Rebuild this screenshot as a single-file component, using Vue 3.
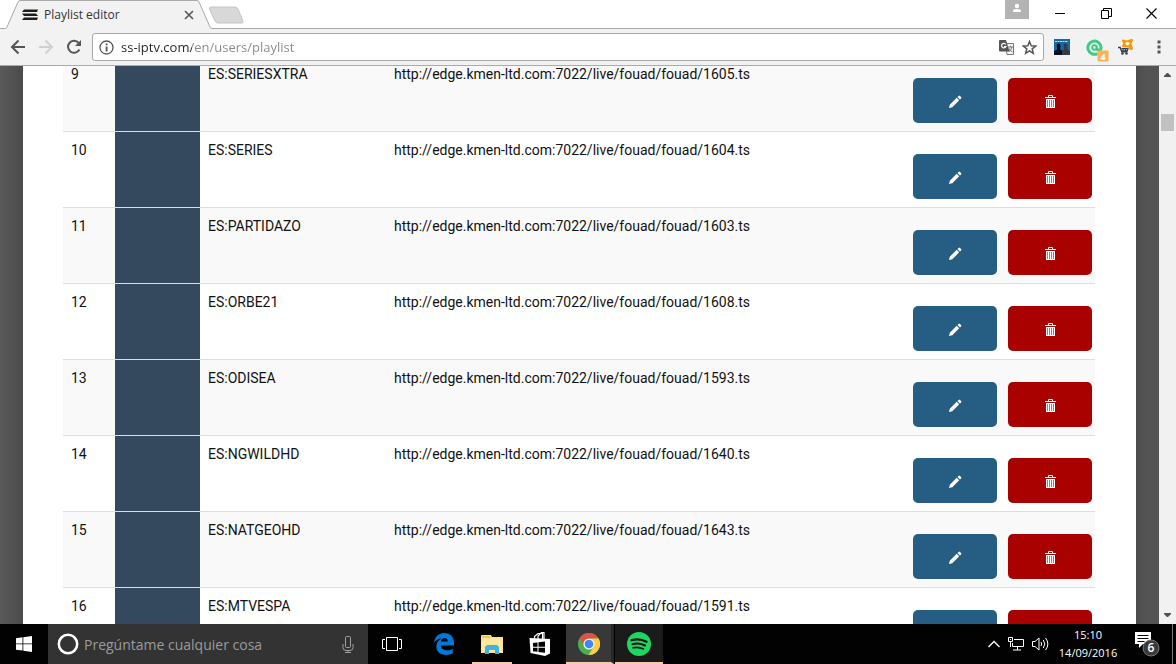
<script setup>
import { ref } from 'vue'

const base = 'http://edge.kmen-ltd.com:7022/live/fouad/fouad/'
const channels = [
  { id: 9, name: 'ES:SERIESXTRA', file: '1605.ts' },
  { id: 10, name: 'ES:SERIES', file: '1604.ts' },
  { id: 11, name: 'ES:PARTIDAZO', file: '1603.ts' },
  { id: 12, name: 'ES:ORBE21', file: '1608.ts' },
  { id: 13, name: 'ES:ODISEA', file: '1593.ts' },
  { id: 14, name: 'ES:NGWILDHD', file: '1640.ts' },
  { id: 15, name: 'ES:NATGEOHD', file: '1643.ts' },
  { id: 16, name: 'ES:MTVESPA', file: '1591.ts' },
]
const address = ref('ss-iptv.com/en/users/playlist')
const query = ref('')
</script>

<template>
  <div class="screen">
    <header class="tabstrip">
      <div class="tab">
        <svg class="tab-shape" width="212" height="29" viewBox="0 0 212 29" aria-hidden="true">
          <path d="M0 29V28.500H5.500Q6.500 28 7 27L18 2Q18.800 .5 20 .5H197Q198.500 .5 199 2L210 27Q210.500 28.500 212 28.500V29Z" fill="#f2f2f2" />
          <path d="M0 28.500H5.500Q6.500 28 7 27L18 2Q18.800 .5 20 .5H197Q198.500 .5 199 2L210 27Q210.500 28.500 212 28.500" fill="none" stroke="#a9a9a9" />
        </svg>
        <svg class="favicon" width="16" height="12" viewBox="0 0 16 12" aria-hidden="true">
          <path d="M2 .5h14L15 3H0zM0 4.500h14l2 2.500H2zM2 8.500h14L15 11H0z" fill="#1d1d1b" />
        </svg>
        <span class="tab-title">Playlist editor</span>
        <button class="plain tab-close" aria-label="Close tab">
          <svg width="10" height="10" viewBox="0 0 10 10"><path d="M1 1l8 8M9 1L1 9" stroke="#5a5a5a" stroke-width="1.700" /></svg>
        </button>
      </div>
      <button class="plain new-tab" aria-label="New tab">
        <svg width="36" height="18" viewBox="0 0 36 18"><path d="M3 1h24q2 0 3 2l5 12q.5 2-1 2H10q-2 0-3-2L1.500 3Q1 1 3 1z" fill="#d8d8d8" stroke="#c4c4c4" /></svg>
      </button>
      <div class="spacer"></div>
      <button class="plain person" aria-label="Profile">
        <svg width="24" height="19" viewBox="0 0 24 19"><circle cx="12" cy="6" r="2.200" fill="#fff" /><path d="M8 12v-1.500Q8.500 9 12 9t4 1.500V12z" fill="#fff" /></svg>
      </button>
      <button class="plain win" aria-label="Minimize"><svg width="11" height="11" viewBox="0 0 11 11"><path d="M0 5.500h10" stroke="#000" /></svg></button>
      <button class="plain win" aria-label="Restore"><svg width="11" height="11" viewBox="0 0 11 11"><path d="M.5 2.500h7v8h-7zM2.500 2.500v-2h8v8h-3" fill="none" stroke="#000" /></svg></button>
      <button class="plain win" aria-label="Close"><svg width="11" height="11" viewBox="0 0 11 11"><path d="M.5.5l10 10M10.500.5l-10 10" stroke="#000" stroke-width="1.100" /></svg></button>
    </header>

    <nav class="toolbar" aria-label="Browser">
      <button class="plain tool" aria-label="Back"><svg width="16" height="16" viewBox="0 0 16 16"><path d="M15 8H2.500M8.500 1.500L2 8l6.500 6.500" fill="none" stroke="#555" stroke-width="2" /></svg></button>
      <button class="plain tool" aria-label="Forward"><svg width="16" height="16" viewBox="0 0 16 16"><path d="M1 8h12.500M7.500 1.500L14 8l-6.500 6.500" fill="none" stroke="#d0d0d0" stroke-width="2" /></svg></button>
      <button class="plain tool" aria-label="Reload"><svg width="16" height="16" viewBox="0 0 16 16"><path d="M13.400 10.500A6 6 0 1 1 12.700 4" fill="none" stroke="#555" stroke-width="2" /><path d="M15 1v6H9z" fill="#555" /></svg></button>
      <div class="omnibox">
        <svg width="15" height="15" viewBox="0 0 15 15" aria-hidden="true"><circle cx="7.500" cy="7.500" r="6.500" fill="none" stroke="#555" stroke-width="1.300" /><path d="M6.700 3.500h1.800v1.700H6.700zM6.700 6.500h1.800V11.500H6.700z" fill="#555" /></svg>
        <input v-model="address" class="address" type="text" aria-label="Address" spellcheck="false" />
        <button class="plain" aria-label="Translate this page">
          <svg width="15" height="15" viewBox="0 0 15 15"><path d="M6 3.500h8.500v11H8z" fill="#f4f4f4" stroke="#777" /><path d="M0 1q0-1 1-1h6l3.500 11.500H1q-1 0-1-1z" fill="#555" /><path d="M6.800 4.300A2.300 2.300 0 1 0 7 6.500H5" fill="none" stroke="#fff" stroke-width="1.200" /><path d="M9 7h5M11.500 5.800V7M13 7q-.8 3-3.500 5M10 8.500q1 2.500 3.500 3.500" fill="none" stroke="#777" /></svg>
        </button>
        <button class="plain star" aria-label="Bookmark this page">
          <svg width="15" height="15" viewBox="0 0 15 15"><path d="M7.500 1.500l1.700 4.200 4.500.3-3.500 2.900 1.100 4.400-3.800-2.400-3.800 2.400 1.100-4.400L1.300 6l4.500-.3z" fill="none" stroke="#555" stroke-width="1.500" /></svg>
        </button>
      </div>
      <button class="plain ext" aria-label="Video extension">
        <svg width="16" height="16" viewBox="0 0 16 16"><path d="M0 0h16v16H0z" fill="#1967a5" /><path d="M1 2.500h13" stroke="#b9dcf4" stroke-dasharray="2 .5" /><path d="M0 16v-4l3-1.500V9Q1.800 4.500 4.500 4.500T6.200 9v1.500L8 11.500V16z" fill="#07111c" /><path d="M8 16v-4.500l2-1V9Q9 4.500 11.500 4.500T13.300 9v1.500l2.700 1.500v4z" fill="#343a40" /></svg>
      </button>
      <button class="plain ext" aria-label="Antivirus extension">
        <svg class="badge-icon" width="23" height="23" viewBox="0 0 23 23"><path d="M11.500 14.600A6.600 6.600 0 1 1 15.100 8.500Q15 11.300 13 11.300T10.800 8.500" fill="none" stroke="#3ecb85" stroke-width="3" /><circle cx="8.500" cy="8.500" r="2.300" fill="none" stroke="#3ecb85" stroke-width="2" /><rect x="11.500" y="11.500" width="11" height="11" rx="1" fill="#ffb157" /><text x="14.500" y="20.500" class="count">4</text></svg>
      </button>
      <button class="plain ext" aria-label="Shopping extension">
        <svg width="16" height="16" viewBox="0 0 16 16"><path d="M4 2.200Q3.800.4 5.500.6L9 1.500 13 0q2.600-.4 1.800 1.800L13.300 5l1.500 3.500q.6 2.700-1.600 2.700-1 0-1.700-1.200L10.200 8.200H4.800q-1.500-.7-.6-2l1.300-1.700z" fill="#ff9800" /><path d="M7 4l2.500-1 2.200.8-.8 2-2.200.6z" fill="#fff" /><path d="M0 8.500h2.200l1.600 4.200h5l1.400-3.700" fill="none" stroke="#35404f" stroke-width="1.400" /><path d="M3.500 9.500h6M3.500 11.200h6M5.200 9v3.500M7.500 9v3.500" fill="none" stroke="#35404f" /><circle cx="4.500" cy="14.500" r="1.300" fill="#35404f" /><circle cx="8.500" cy="14.500" r="1.300" fill="#35404f" /></svg>
      </button>
      <button class="plain menu" aria-label="Menu"><svg width="4" height="14" viewBox="0 0 4 14"><path d="M.5 .5h3v3h-3zM.5 5.500h3v3h-3zM.5 10.500h3v3h-3z" fill="#555" /></svg></button>
    </nav>

    <div class="viewport">
      <main class="page">
        <table class="channels">
          <colgroup><col class="c-num" /><col class="c-logo" /><col class="c-name" /><col /><col class="c-act" /></colgroup>
          <tbody>
            <tr v-for="c in channels" :key="c.id">
              <td>{{ c.id }}</td>
              <td class="logo"></td>
              <td>{{ c.name }}</td>
              <td>{{ base }}{{ c.file }}</td>
              <td class="actions">
                <div class="pair">
                  <button class="act edit" :aria-label="'Edit ' + c.name">
                    <svg width="14" height="14" viewBox="0 0 14 14"><path d="M1 13l.8-3.300L8.700 2.800l2.500 2.500-6.900 6.900zM9.500 2l1.100-1.100q.7-.6 1.400 0l1.100 1.100q.6.700 0 1.400L12 4.500z" fill="#fff" /></svg>
                  </button>
                  <button class="act remove" :aria-label="'Delete ' + c.name">
                    <svg width="11" height="14" viewBox="0 0 11 14"><path d="M3.500 2V.5h4V2" fill="none" stroke="#fff" /><path d="M0 2h11v1H0z" fill="#fff" /><path d="M1 4h9v9H1z" fill="#fff" /><path d="M2.500 5v7M4.500 5v7M6.500 5v7M8.500 5v7" stroke="#c96b6b" /></svg>
                  </button>
                </div>
              </td>
            </tr>
          </tbody>
        </table>
      </main>
      <div class="scrollbar" aria-hidden="true">
        <svg width="7" height="4" viewBox="0 0 7 4"><path d="M0 4V3l3-3h1l3 3v1z" fill="#505050" /></svg>
        <div class="thumb"></div>
        <svg width="7" height="4" viewBox="0 0 7 4"><path d="M0 0v1l3 3h1l3-3V0z" fill="#505050" /></svg>
      </div>
    </div>

    <footer class="taskbar">
      <button class="plain app" aria-label="Start">
        <svg width="16" height="16" viewBox="0 0 16 16"><path d="M0 2.200l6.500-.9v6.200H0zM7.300 1.200L16 0v7.500H7.300zM0 8.300h6.500v6.300L0 13.700zM7.300 8.300H16V16l-8.700-1.200z" fill="#fff" /></svg>
      </button>
      <div class="search">
        <svg width="22" height="22" viewBox="0 0 22 22" aria-hidden="true"><circle cx="11" cy="11" r="9.200" fill="none" stroke="#fff" stroke-width="2.500" /></svg>
        <input v-model="query" type="text" placeholder="Pregúntame cualquier cosa" aria-label="Pregúntame cualquier cosa" />
        <button class="plain" aria-label="Voice search">
          <svg width="12" height="17" viewBox="0 0 12 17"><rect x="3.500" y=".5" width="5" height="11" rx="1" fill="none" stroke="#a0a0a0" /><path d="M1 8v3.500Q1 14.500 4 14.500h4q3 0 3-3V8M6 14.500v2M3 16.500h6" fill="none" stroke="#a0a0a0" /></svg>
        </button>
      </div>
      <button class="plain app" aria-label="Task view">
        <svg width="20" height="14" viewBox="0 0 20 14"><path d="M4.500.5h11v13h-11zM3 2.500H.5v9H3M17 2.500h2.500v9H17" fill="none" stroke="#fff" /></svg>
      </button>
      <button class="plain app edge" aria-label="Edge">
        <svg width="20" height="22" viewBox="0 0 20 22"><path d="M0 9.700C.8 3.600 4.800 0 10.300 0 16.200 0 20 4.200 20 9.500v3H6.800c.2 3.200 3 4.700 6.400 4.700 2.100 0 3.900-.5 5.600-1.500v4.500c-2 1.200-4.400 1.700-7 1.700C6 21.900 2.300 18.500 2.300 13.700c0-3.800 2.100-6.800 5.300-8.300C4.300 5.500 1.700 7.100 0 9.700zm7-1.200h6.700C13.600 6.300 12.700 5 10.500 5 8.700 5 7.400 6.400 7 8.500z" fill="#0078d7" /></svg>
      </button>
      <button class="plain app open explorer" aria-label="File Explorer">
        <svg width="22" height="19" viewBox="0 0 22 19"><path d="M1 0h9l1 2h11v16H0V1q0-1 1-1z" fill="#ffe08a" /><path d="M1 1h8l1 2h11v2H1z" fill="#f5c84c" /><path d="M1 3h20v14H1z" fill="#ffe89c" /><path d="M4 19v-7l2-2h10l2 2v7h-4v-4H8v4z" fill="#3eb1e5" /></svg>
      </button>
      <button class="plain app" aria-label="Store">
        <svg width="22" height="24" viewBox="0 0 22 24"><path d="M5.500 7V4.500L9 1.500h4.500V7M9 7V4l3.500-3.500H15V7" fill="none" stroke="#fff" stroke-width="1.200" /><path d="M.5 6L21 7v14.500L16 24 1.500 21z" fill="#fff" /><path d="M4 11l4.500-.6v4.400H4zM9.500 10.200l6.500-.8v5.400H9.500zM4 15.800h4.500v4L4 19.200zM9.500 15.800H16v5l-6.500-.9z" fill="#000" /></svg>
      </button>
      <button class="plain app open chrome" aria-label="Chrome">
        <svg width="22" height="22" viewBox="0 0 22 22"><circle cx="11" cy="11" r="11" fill="#4caf50" /><path d="M11 0a11 11 0 0 1 9.600 5.600H11L6.300 13.500 1.500 5.500A11 11 0 0 1 11 0z" fill="#de5145" /><path d="M20.600 5.600A11 11 0 0 1 10.500 22l5.200-8.300V8L13 5.600z" fill="#ffcd42" /><circle cx="11" cy="11" r="5.600" fill="#f4f4f4" /><circle cx="11" cy="11" r="4.300" fill="#4285f4" /></svg>
      </button>
      <button class="plain app open spotify" aria-label="Spotify">
        <svg width="24" height="24" viewBox="0 0 24 24"><circle cx="12" cy="12" r="12" fill="#1ed760" /><path d="M4.500 8.200q8-2.300 15 1.500" fill="none" stroke="#191414" stroke-width="2.300" stroke-linecap="round" /><path d="M5.500 12.200q6.500-1.900 12.500 1.300" fill="none" stroke="#191414" stroke-width="2" stroke-linecap="round" /><path d="M6 15.800q5.500-1.300 10.500 1.200" fill="none" stroke="#191414" stroke-width="1.600" stroke-linecap="round" /></svg>
      </button>
      <div class="spacer"></div>
      <div class="tray">
        <button class="plain" aria-label="Show hidden icons"><svg width="12" height="8" viewBox="0 0 12 8"><path d="M.5 7L6 1.500 11.500 7" fill="none" stroke="#fff" stroke-width="1.300" /></svg></button>
        <button class="plain" aria-label="Network"><svg width="16" height="14" viewBox="0 0 16 14"><path d="M6 2.500h9.500v7H4.500V6M9.500 9.500V13M5 13h8M.5.500h4v4h-4zM2.500 4.500V10" fill="none" stroke="#fff" /><path d="M2 2h1v1H2z" fill="#fff" /></svg></button>
        <button class="plain" aria-label="Volume"><svg width="17" height="14" viewBox="0 0 17 14"><path d="M.5 4.500H3l4-3.500v12L3 9.500H.5zM9 5q1.300 2 0 4M11.300 3q3 4 0 8M13.600 1q4.500 6 0 12" fill="none" stroke="#fff" /></svg></button>
      </div>
      <button class="plain clock"><span>15:10</span><span>14/09/2016</span></button>
      <button class="plain notify" aria-label="6 notifications">
        <svg width="26" height="26" viewBox="0 0 26 26"><path d="M0 1h16v12H8l-4 4v-4H0z" fill="#fff" /><path d="M2.500 4.500h11M2.500 7.500h11M2.500 10.500h7" stroke="#000" /><circle cx="16" cy="17" r="8" fill="#3b3b3b" stroke="#777" /><text x="12.500" y="21" class="bubble">6</text></svg>
      </button>
      <button class="plain desktop" aria-label="Show desktop"></button>
    </footer>
  </div>
</template>

<style>
body { margin: 0; }
</style>

<style scoped>
.screen { height: 100vh; display: flex; flex-direction: column; overflow: hidden; font-family: "Segoe UI", "Open Sans", "Noto Sans", sans-serif; background: #fff; }
.screen * { box-sizing: border-box; }
svg { display: block; flex: none; }
.plain { border: 0; padding: 0; margin: 0; background: none; font: inherit; color: inherit; display: flex; align-items: center; justify-content: center; flex: none; }
.spacer { flex: 1; }

.tabstrip { flex: none; height: 29px; display: flex; align-items: flex-start; padding-right: 3px; border-bottom: 1px solid #a9a9a9; }
.tab { position: relative; width: 212px; height: 29px; padding: 0 17px 0 22px; display: flex; align-items: center; gap: 6px; font-size: 12px; color: #333; }
.tab-shape { position: absolute; left: 0; top: 0; }
.favicon, .tab-title, .tab-close { position: relative; }
.tab-title { flex: 1; white-space: nowrap; }
.tab-close { width: 12px; height: 12px; }
.new-tab { margin: 6px 0 0 -4px; }
.person { width: 24px; height: 19px; background: #b3b3b3; margin-right: 8px; }
.win { width: 46px; height: 27px; }
.win:last-child { width: 44px; }

.toolbar { flex: none; height: 37px; display: flex; align-items: center; background: #f2f2f2; border-bottom: 1px solid #aaa; padding: 0 9px 0 4px; }
.tool { width: 28px; height: 28px; }
.omnibox { flex: 1; margin: 0 10px 0 4px; height: 28px; display: flex; align-items: center; background: #fff; border: 1px solid #a8a8a8; border-radius: 3px; padding: 0 6px; }
.address { flex: 1; min-width: 0; border: 0; outline: 0; padding: 0; margin-left: 7px; height: 24px; font-family: inherit; font-size: 13px; color: transparent; background: linear-gradient(90deg, #222 71px, #888 71px); -webkit-background-clip: text; background-clip: text; }
.star { margin-left: 8px; }
.ext { width: 16px; height: 16px; margin-right: 16px; }
.badge-icon { margin: 6px 0 0 6px; }
.count { font: bold 9px "Open Sans", sans-serif; fill: #fff; }
.menu { width: 16px; height: 24px; margin-left: 1px; }

.viewport { flex: 1; min-height: 0; display: flex; overflow: hidden; background: linear-gradient(90deg, #595959, #4c4c4c 23px, #4c4c4c calc(100% - 40px), #545454 calc(100% - 30px)); }
.page { flex: 1; min-width: 0; margin: 0 23px; padding: 0 41px 0 40px; background: #fff; overflow: hidden; }
.channels { width: 100%; margin-top: -11px; table-layout: fixed; border-collapse: separate; border-spacing: 0; font-family: Roboto, sans-serif; font-size: 14px; line-height: 20px; color: #111; }
.c-num { width: 52px; }
.c-logo { width: 85px; }
.c-name { width: 186px; }
.c-act { width: 190px; }
.channels td { height: 76px; padding: 8px; vertical-align: top; border-top: 1px solid #ddd; white-space: nowrap; }
.channels tr:nth-child(odd) { background: #f9f9f9; }
.channels .logo { background: #34495e; }
.channels .actions { padding: 22px 3px 8px 0; }
.pair { display: flex; justify-content: flex-end; gap: 11px; }
.act { width: 84px; height: 45px; border: 0; padding: 2px 0 0; border-radius: 5px; display: flex; align-items: center; justify-content: center; }
.edit { background: #265d82; }
.remove { background: #a90000; }
.scrollbar { flex: none; width: 17px; background: #f1f1f1; display: flex; flex-direction: column; align-items: center; padding: 7px 0; }
.thumb { width: 13px; height: 17px; margin: 37px 0 auto; background: #c1c1c1; }

.taskbar { flex: none; height: 40px; display: flex; align-items: stretch; background: #020202; color: #fff; }
.app { width: 48px; height: 40px; padding-top: 2px; border-bottom: 2px solid transparent; }
.search { flex: none; width: 320px; display: flex; align-items: center; background: #333; padding: 0 14px 0 9px; gap: 5px; }
.search input { flex: 1; min-width: 0; border: 0; outline: 0; padding: 0; background: transparent; color: #fff; font-family: inherit; font-size: 14px; }
.search input::placeholder { color: #9b9b9b; opacity: 1; }
.edge { margin-left: 4px; }
.explorer { width: 40px; margin: 0 4px; }
.open { border-bottom-color: #fcc9a5; }
.chrome { width: 48px; background: #383838; margin-left: 2px; border-right: 3px solid #262626; }
.spotify { background: #1b1b1b; margin-left: 1px; }
.tray { display: flex; align-items: center; gap: 8px; padding-right: 10px; }
.clock { width: 58px; flex-direction: column; font-size: 11px; line-height: 18px; white-space: nowrap; }
.notify { width: 26px; margin: 0 11px 0 18px; }
.bubble { font: 600 12px "Open Sans", sans-serif; fill: #fff; }
.desktop { width: 4px; border-left: 1px solid #777; }
</style>
